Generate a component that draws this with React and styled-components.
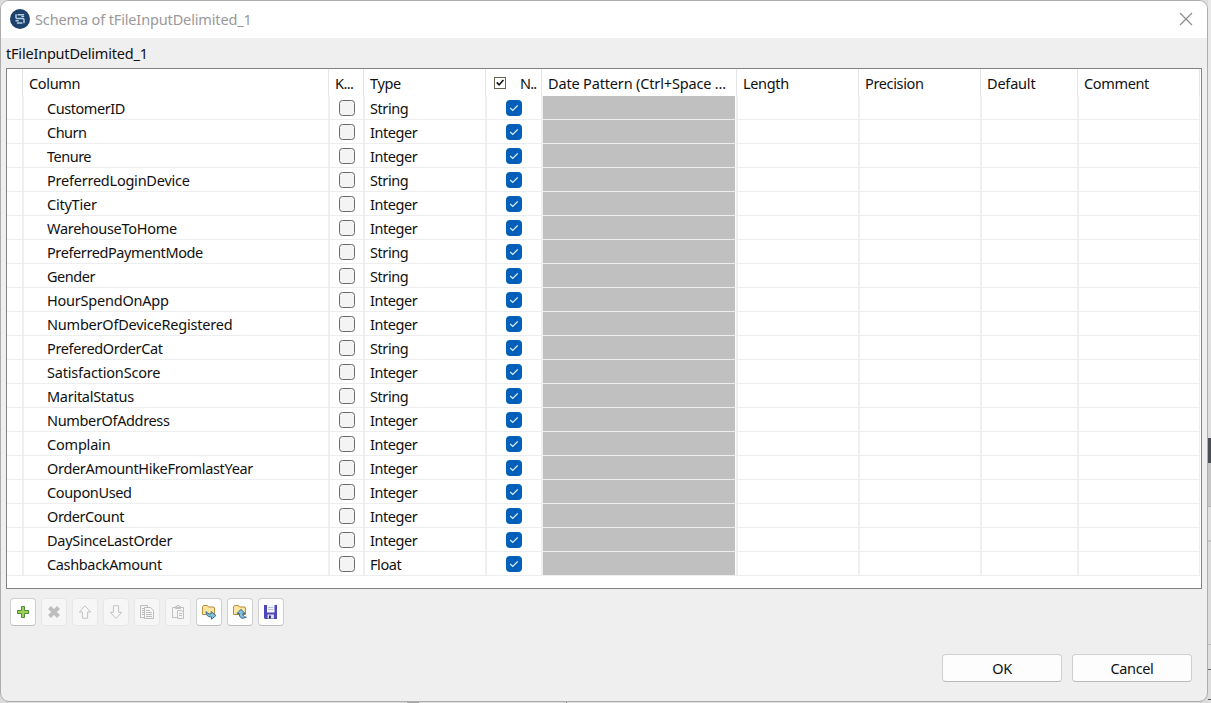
import React from "react";
import styled, { createGlobalStyle, css } from "styled-components";

const Global = createGlobalStyle`
  * { box-sizing: border-box; }
  body {
    margin: 0;
    overflow: hidden;
    background: #d9d9d9;
    font-family: "Noto Sans", "Open Sans", sans-serif;
    font-size: 14.5px;
    letter-spacing: -0.35px;
    color: #111;
  }
`;

const Desktop = styled.div`
  display: flex;
  width: 1211px;
  height: 703px;
  background: linear-gradient(90deg, transparent 407px, #a6a6a6 407px 419px, transparent 419px 566px, #777 566px 567px, transparent 567px) 0 702px / 1211px 1px no-repeat, #dcdcdc;
`;
const Edge = styled.div`
  width: 3px;
  height: 703px;
  background: linear-gradient(180deg,
    #e9e9e9 0 120px, #dedede 438px, #4b4d57 438px 463px, #c8c7c7 463px 506px,
    #b4b4b6 506px 507px, #dfdfdf 507px 540px, #c2c4c9 540px 542px, #dcdcdc 542px 644px,
    #bcbcbc 644px 645px, #dedede 645px 669px, #666 669px 670px, #dedede 670px 699px, #555 699px 700px, #dedede 700px);
`;
const Window = styled.main`
  display: flex;
  flex-direction: column;
  width: 1208px;
  height: 702px;
  border: 1px solid #adadad;
  border-radius: 9px;
  background: #efefef;
  overflow: hidden;
`;
const TitleBar = styled.header`
  display: flex;
  align-items: center;
  height: 37px;
  padding: 0 14px 1px 9px;
  background: #fff;
  color: #999;
`;
const Title = styled.h1`
  flex: 1;
  margin: 0 0 0 5px;
  font-size: 14.5px;
  font-weight: 400;
  line-height: 20px;
  letter-spacing: -0.14px;
`;
const SchemaName = styled.div`
  height: 30px;
  padding: 5px 0 0 5px;
  line-height: 20px;
  letter-spacing: -0.2px;
`;
const Table = styled.section`
  width: 1196px;
  height: 521px;
  margin-left: 5px;
  border: 1px solid #828387;
  background: #fff;
`;
const columns = css`
  display: grid;
  grid-template-columns: 16px 306px 35px 122px 56px 195px 122px 122px 97px 122px;
`;
const HeadRow = styled.div`
  ${columns}
  grid-template-rows: 27px;
`;
const HeadCell = styled.div`
  display: flex;
  align-items: center;
  border-right: 1px solid #e3e5e8;
  padding: ${(p) => (p.$check ? "1px 0 0 8px" : "1px 0 0 6px")};
  gap: 14px;
  white-space: nowrap;
  letter-spacing: ${(p) => p.$tracking || "inherit"};
`;
const Row = styled.div`
  ${columns}
  grid-template-rows: 23px;
  height: 24px;
  width: 1193px;
  border-bottom: 1px solid #eceef0;
`;
const Cell = styled.div`
  border-right: 1px solid #eeeff2;
  box-shadow: inset ${(p) => (p.$first ? 0 : 1)}px 0 #eeeff2;
  padding: ${(p) => p.$pad || "0 0 0 6px"};
  line-height: 25px;
  white-space: nowrap;
  letter-spacing: ${(p) => p.$tracking || "inherit"};
`;
const Unavailable = styled(Cell)`
  background: #c0c0c0;
  box-shadow: inset 1px 0 #eeeff2, inset -1px 0 #fff;
`;
const Check = styled.span`
  display: flex;
  align-items: center;
  justify-content: center;
  width: 16px;
  height: 16px;
  border-radius: 3.5px;
  border: 1px solid ${(p) => (p.$on ? "#005fb8" : "#6a6a6a")};
  background: ${(p) => (p.$on ? "#005fb8" : "#f4f4f4")};
`;
const HeadCheck = styled.span`
  display: flex;
  width: 12px;
  height: 12px;
  margin-bottom: 1px;
  border: 1px solid #66624f;
`;
const Toolbar = styled.div`
  display: flex;
  gap: 5px;
  padding: 9px 0 0 9px;
`;
const ToolButton = styled.button`
  display: flex;
  align-items: center;
  justify-content: center;
  width: 26px;
  height: 28px;
  padding: 0;
  border: 1px solid ${(p) => (p.disabled ? "#e7e7e7" : "#cfcfcf")};
  border-bottom-color: ${(p) => (p.disabled ? "#e7e7e7" : "#bcbcbc")};
  border-radius: 4px;
  background: ${(p) => (p.disabled ? "#f6f6f6" : "#fefefe")};
`;
const Footer = styled.footer`
  display: flex;
  justify-content: flex-end;
  gap: 10px;
  padding: 28px 15px 0 0;
`;
const Button = styled.button`
  width: 120px;
  height: 28px;
  padding: 0 0 1px;
  border: 1px solid #d0d0d0;
  border-bottom-color: #bababa;
  border-radius: 4px;
  background: #fdfdfd;
  color: #111;
  font: inherit;
  letter-spacing: inherit;
`;

const AppIcon = () => (
  <svg width="20" height="20" viewBox="0 0 20 20">
    <circle cx="10" cy="10" r="10" fill="#1c426b" />
    <g fill="none" stroke="#b7cfe2" strokeWidth="1.5" strokeLinecap="round" strokeLinejoin="round">
      <path d="M8 5.800h5.500M6 5.800v2.700c0 .8.500 1 1.200 1h5.300c.8 0 1.500.4 1.500 1.200v2.800M12 14H7.500" />
      <path d="M6 11.800h2.200M12 7.600h1.500" />
    </g>
  </svg>
);
const CloseIcon = () => (
  <svg width="14" height="14" viewBox="0 0 14 14">
    <path d="M1 1l12 12M13 1L1 13" stroke="#8b8b8b" strokeWidth="1.15" />
  </svg>
);
const Tick = () => (
  <svg width="10" height="8" viewBox="0 0 10 8">
    <path d="M1.2 4l2.5 2.5 5-5" fill="none" stroke="#e6f2ff" strokeWidth="1.1" />
  </svg>
);
const HeadTick = () => (
  <svg width="10" height="10" viewBox="0 0 10 10">
    <path d="M1.8 4.400l2.300 2.500 4.300-5" fill="none" stroke="#111" strokeWidth="1.6" />
  </svg>
);

const folder = (
  <path d="M1.500 10.500v-7.500l1-1.500h3.900l1.100 1.500h5.500l.5.800v6.700z" fill="#fbe5a0" stroke="#bd8d3c" />
);
const glyphs = {
  add: (
    <path d="M6.500 2.500h3v4h4v3h-4v4h-3v-4h-4v-3h4z" fill="#a3cf52" stroke="#4b8a3a" />
  ),
  remove: <path d="M3.500 3.500l9 9M12.500 3.500l-9 9" stroke="#bebebe" strokeWidth="4" />,
  up: <path d="M8 1.800l5.600 6.200h-3v6.200H5.400V8h-3z" fill="#f8f8f8" stroke="#c2c2c2" strokeLinejoin="round" />,
  down: <path d="M8 14.500l5.600-6.200h-3V1.800H5.400v6.500h-3z" fill="#f8f8f8" stroke="#c2c2c2" strokeLinejoin="round" />,
  copy: (
    <g fill="#f6f6f6" stroke="#bdbdbd">
      <path d="M1.500 1.500h7v12h-7zM3 4.500h3M3 6.500h3M3 8.500h3M3 10.500h3" />
      <path d="M5.500 3.500h6l3 3v8h-9zM7 6.500h4M7 8.500h6M7 10.500h6M7 12.500h6" />
    </g>
  ),
  paste: (
    <g fill="#f6f6f6" stroke="#c0c0c0">
      <path d="M2.500 3.500h11v10h-11zM5.500 3.500v-1h1.500v-1h2v1h1.500v2h-5z" />
      <path d="M7.500 6.500h4l2 2v6h-6zM9 9.500h3M9 11.500h3" />
    </g>
  ),
  load: (
    <g>
      {folder}
      <path d="M5.200 7.500c1 2 2.300 2.500 5 2.400V7.600l4.800 3.900-4.500 3.700v-2.300c-3.600.1-5.600-1.700-5.300-5.400z" fill="#86bfd6" stroke="#24638c" strokeWidth=".9" />
    </g>
  ),
  save: (
    <g>
      {folder}
      <path d="M9 5.300l4.200 4.200h-2.400c0 2.500 1.200 3.500 3.500 3.700-4.300 2.300-7.100.7-7-3.700H5z" fill="#86bfd6" stroke="#24638c" strokeWidth=".9" />
    </g>
  ),
  disk: (
    <g>
      <path d="M1 1h13v14H2l-1-1z" fill="#4d47b8" />
      <path d="M4 1h7.500v7.500H4z" fill="#f5f5fd" />
      <path d="M5 3.500h5.500M5 5.500h5.500" stroke="#bebed4" />
      <path d="M4.500 10.500h6.500v4H4.500z" fill="#dcdcf0" />
      <path d="M6 11.500h1.800v3H6z" fill="#27236f" />
    </g>
  ),
};
const tools = [
  ["add", false], ["remove", true], ["up", true], ["down", true], ["copy", true],
  ["paste", true], ["load", false], ["save", false], ["disk", false],
];

const fields = [
  ["CustomerID", "String", "-0.45px"], ["Churn", "Integer", "-0.5px"], ["Tenure", "Integer", "-0.5px"],
  ["PreferredLoginDevice", "String", "-0.23px"], ["CityTier", "Integer", "-0.23px"],
  ["WarehouseToHome", "Integer", "-0.28px"], ["PreferredPaymentMode", "String", "-0.4px"],
  ["Gender", "String", "-0.45px"], ["HourSpendOnApp", "Integer", "-0.22px"],
  ["NumberOfDeviceRegistered", "Integer", "-0.22px"], ["PreferedOrderCat", "String"],
  ["SatisfactionScore", "Integer", "-0.18px"], ["MaritalStatus", "String", "-0.28px"],
  ["NumberOfAddress", "Integer"], ["Complain", "Integer", "-0.2px"],
  ["OrderAmountHikeFromlastYear", "Integer", "-0.32px"], ["CouponUsed", "Integer"],
  ["OrderCount", "Integer", "-0.42px"], ["DaySinceLastOrder", "Integer", "-0.28px"],
  ["CashbackAmount", "Float"],
];

export default function App() {
  return (
    <Desktop>
      <Global />
      <Window>
        <TitleBar>
          <AppIcon />
          <Title>Schema of tFileInputDelimited_1</Title>
          <CloseIcon />
        </TitleBar>
        <SchemaName>tFileInputDelimited_1</SchemaName>
        <Table>
          <HeadRow>
            <HeadCell />
            <HeadCell>Column</HeadCell>
            <HeadCell $tracking="-0.6px">K...</HeadCell>
            <HeadCell>Type</HeadCell>
            <HeadCell $check $tracking="-0.8px">
              <HeadCheck><HeadTick /></HeadCheck>
              <span>N..</span>
            </HeadCell>
            <HeadCell $tracking="-0.16px">Date Pattern (Ctrl+Space ...</HeadCell>
            <HeadCell>Length</HeadCell>
            <HeadCell>Precision</HeadCell>
            <HeadCell $tracking="-0.2px">Default</HeadCell>
            <HeadCell>Comment</HeadCell>
          </HeadRow>
          {fields.map(([name, type, tracking]) => (
            <Row key={name}>
              <Cell $first />
              <Cell $pad="0 0 0 24px" $tracking={tracking}>{name}</Cell>
              <Cell $pad="4px 0 0 10px"><Check /></Cell>
              <Cell $tracking="-0.42px">{type}</Cell>
              <Cell $pad="4px 0 0 20px"><Check $on><Tick /></Check></Cell>
              <Unavailable />
              <Cell />
              <Cell />
              <Cell />
              <Cell />
            </Row>
          ))}
        </Table>
        <Toolbar>
          {tools.map(([name, off]) => (
            <ToolButton key={name} disabled={off} aria-label={name}>
              <svg width="16" height="16" viewBox="0 0 16 16" fill="none">{glyphs[name]}</svg>
            </ToolButton>
          ))}
        </Toolbar>
        <Footer>
          <Button>OK</Button>
          <Button>Cancel</Button>
        </Footer>
      </Window>
      <Edge />
    </Desktop>
  );
}
